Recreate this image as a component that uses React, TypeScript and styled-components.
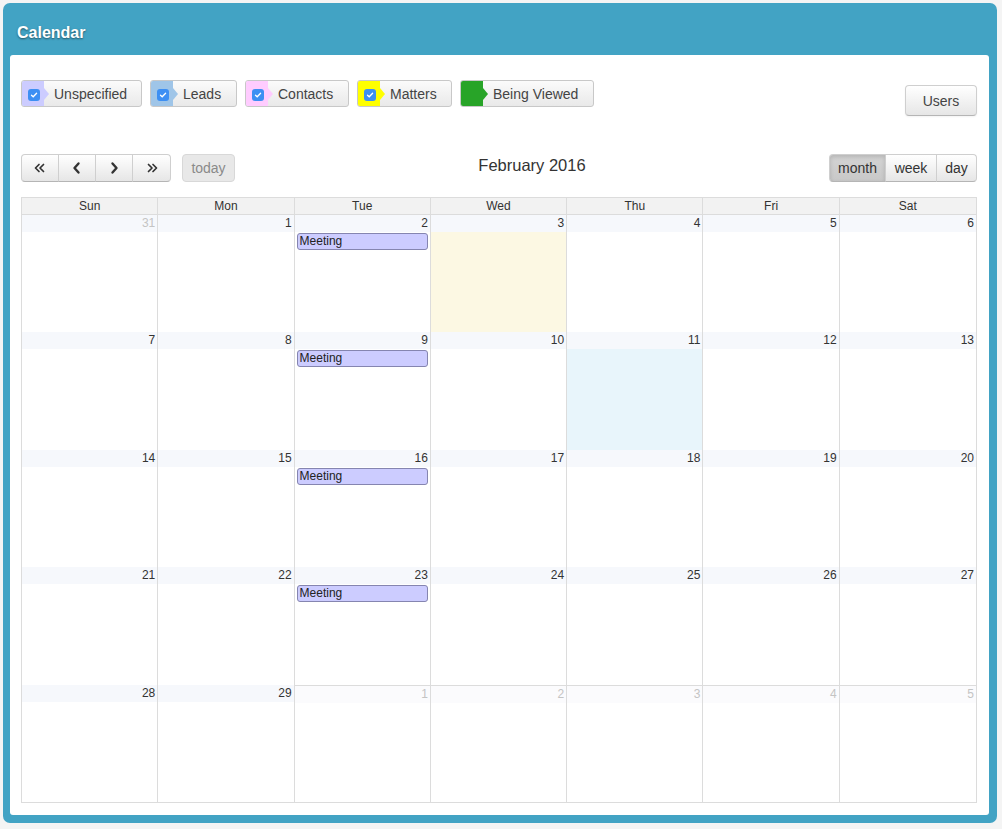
import React from "react"
import styled, {createGlobalStyle} from "styled-components"

const GlobalStyle = createGlobalStyle`
  body {
    margin: 0;
    background: #f4f4f4;
    font-family: "Liberation Sans", Arial, sans-serif;
    color: #333;
  }
`

type Filter = {
  label: string
  color: string
  checkbox: boolean
  width: number
}

const filters: Filter[] = [
  {label: "Unspecified", color: "#ccccff", checkbox: true, width: 121},
  {label: "Leads", color: "#9fc5e8", checkbox: true, width: 87},
  {label: "Contacts", color: "#ffccff", checkbox: true, width: 104},
  {label: "Matters", color: "#ffff00", checkbox: true, width: 95},
  {label: "Being Viewed", color: "#28a428", checkbox: false, width: 134},
]

type Day = {
  n: number
  other?: boolean
  today?: boolean
  selected?: boolean
  event?: string
  lastRow?: boolean
}

function buildDays(): Day[] {
  const days: Day[] = [{n: 31, other: true}]
  for (let d = 1; d <= 29; d++) {
    days.push({
      n: d,
      today: d === 3,
      selected: d === 11,
      event: d === 2 || d === 9 || d === 16 || d === 23 ? "Meeting" : undefined,
    })
  }
  for (let d = 1; d <= 5; d++) days.push({n: d, other: true, lastRow: true})
  return days
}

const weekdays = ["Sun", "Mon", "Tue", "Wed", "Thu", "Fri", "Sat"]

const Panel = styled.div`
  margin: 3px;
  width: 979px;
  background: #42a3c4;
  border-radius: 7px;
  padding: 0 8px 8px 7px;
`

const PanelHeader = styled.div`
  height: 52px;
  display: flex;
  align-items: center;
  padding-left: 7px;
  color: #fff;
  font-weight: bold;
  font-size: 16px;
  text-shadow: 0 1px 2px rgba(0, 0, 0, 0.5);
  padding-top: 7px;
  box-sizing: border-box;
`

const Body = styled.div`
  background: #fff;
  border-radius: 3px;
  padding: 25px 12px 12px 11px;
`

const FilterBar = styled.div`
  display: flex;
  align-items: flex-start;
  gap: 8px;
  height: 35px;
  margin-bottom: 39px;
`

const FilterButton = styled.div<{w: number}>`
  width: ${({w}) => w}px;
  height: 27px;
  box-sizing: border-box;
  display: flex;
  align-items: center;
  border: 1px solid #c8c8c8;
  border-radius: 3px;
  background: linear-gradient(#fbfbfb, #e9e9e9);
  font-size: 14px;
  color: #444;
  overflow: hidden;
`

const Swatch = styled.div<{color: string}>`
  position: relative;
  width: 22px;
  height: 100%;
  background: ${({color}) => color};
  display: flex;
  align-items: center;
  justify-content: center;
  margin-right: 10px;
  flex-shrink: 0;

  &::after {
    content: "";
    position: absolute;
    right: -5px;
    top: 50%;
    margin-top: -6px;
    border-style: solid;
    border-width: 6px 0 6px 5px;
    border-color: transparent transparent transparent ${({color}) => color};
  }
`

const Check = styled.div`
  width: 12px;
  height: 12px;
  border-radius: 3px;
  background: #3d8ff3;
  display: flex;
  align-items: center;
  justify-content: center;
  margin-top: 2px;
  margin-left: 2px;
`

const Spacer = styled.div`
  flex: 1;
`

const Button = styled.button`
  height: 28px;
  box-sizing: border-box;
  border: 1px solid #cfcfcf;
  border-bottom-color: #b5b5b5;
  background: linear-gradient(#ffffff, #e6e6e6);
  box-shadow: inset 0 1px 0 rgba(255, 255, 255, 0.2), 0 1px 2px rgba(0, 0, 0, 0.05);
  font-family: "Liberation Sans", Arial, sans-serif;
  font-size: 14px;
  color: #333;
  padding: 0;
  display: flex;
  align-items: center;
  justify-content: center;
`

const UsersButton = styled(Button)`
  width: 72px;
  height: 31px;
  margin-top: 5px;
  border-radius: 4px;
  font-size: 14px;
  color: #444;
`

const Toolbar = styled.div`
  display: flex;
  align-items: flex-start;
  margin-bottom: 15px;
`

const Group = styled.div`
  display: flex;
`

const GroupButton = styled(Button)<{w: number; active?: boolean}>`
  width: ${({w}) => w}px;
  border-radius: 0;
  margin-left: -1px;
  background: ${({active}) => (active ? "linear-gradient(#d4d4d4, #c8c8c8)" : "linear-gradient(#ffffff, #e6e6e6)")};
  box-shadow: ${({active}) => (active ? "inset 0 2px 4px rgba(0,0,0,0.15)" : "none")};

  &:first-child {
    margin-left: 0;
    border-radius: 4px 0 0 4px;
  }
  &:last-child {
    border-radius: 0 4px 4px 0;
  }
`

const TodayButton = styled(Button)`
  width: 53px;
  margin-left: 11px;
  border-radius: 4px;
  background: #e8e8e8;
  border-color: #d8d8d8;
  color: #8a8a8a;
  box-shadow: none;
`

const Title = styled.h2`
  flex: 1;
  margin: 0;
  text-align: center;
  font-size: 16.5px;
  font-weight: normal;
  line-height: 22px;
  color: #333;
`

const Grid = styled.div`
  border: 1px solid #dcdcdc;
  display: grid;
  grid-template-columns: repeat(7, 1fr);
  grid-template-rows: 17px repeat(5, 1fr);
  height: 604px;
`

const HeadCell = styled.div<{last?: boolean}>`
  background: #f2f2f2;
  border-bottom: 1px solid #dcdcdc;
  border-right: ${({last}) => (last ? "none" : "1px solid #dcdcdc")};
  font-size: 12px;
  line-height: 16px;
  text-align: center;
  color: #333;
`

const DayCell = styled.div<{last?: boolean; bg: string; top?: boolean}>`
  border-right: ${({last}) => (last ? "none" : "1px solid #dcdcdc")};
  border-top: ${({top}) => (top ? "1px solid #dcdcdc" : "none")};
  display: flex;
  flex-direction: column;
  background: ${({bg}) => bg};
  min-width: 0;
`

const DayNumber = styled.div<{other?: boolean; faint?: boolean}>`
  height: 17px;
  line-height: 17px;
  background: ${({faint}) => (faint ? "#fbfbfd" : "#f6f8fc")};
  text-align: right;
  padding-right: 2px;
  font-size: 12px;
  color: ${({other}) => (other ? "#c4c4c4" : "#333")};
`

const Event = styled.div`
  margin: 1px 2px 0 2px;
  height: 17px;
  box-sizing: border-box;
  border: 1px solid #8585b0;
  border-radius: 3px;
  background: #ccccff;
  font-size: 12px;
  line-height: 15px;
  padding-left: 2px;
  color: #222;
`

function Chevron({dir, double}: {dir: "left" | "right"; double?: boolean}) {
  const flip = dir === "right" ? "scale(-1,1) translate(-14,0)" : undefined
  return (
    <svg width="14" height="14" viewBox="0 0 14 14">
      <g transform={flip} fill="none" stroke="#333" strokeWidth={double ? 1.7 : 2.4} strokeLinecap="round" strokeLinejoin="round">
        {double ? (
          <>
            <path d="M6 3.5 L2.5 7 L6 10.5" />
            <path d="M10.5 3.5 L7 7 L10.5 10.5" />
          </>
        ) : (
          <path d="M8.5 2.5 L4.5 7 L8.5 11.5" />
        )}
      </g>
    </svg>
  )
}

export default function App() {
  const days = buildDays()

  return (
    <>
      <GlobalStyle />
      <Panel>
        <PanelHeader>Calendar</PanelHeader>
        <Body>
          <FilterBar>
            {filters.map((f) => (
              <FilterButton key={f.label} w={f.width}>
                <Swatch color={f.color}>
                  {f.checkbox && (
                    <Check>
                      <svg width="8" height="8" viewBox="0 0 8 8">
                        <path d="M1.5 4.2 L3.2 5.8 L6.6 2.2" fill="none" stroke="#fff" strokeWidth="1.3" strokeLinecap="round" />
                      </svg>
                    </Check>
                  )}
                </Swatch>
                {f.label}
              </FilterButton>
            ))}
            <Spacer />
            <UsersButton>Users</UsersButton>
          </FilterBar>

          <Toolbar>
            <Group>
              <GroupButton w={38}>
                <Chevron dir="left" double />
              </GroupButton>
              <GroupButton w={38}>
                <Chevron dir="left" />
              </GroupButton>
              <GroupButton w={38}>
                <Chevron dir="right" />
              </GroupButton>
              <GroupButton w={39}>
                <Chevron dir="right" double />
              </GroupButton>
            </Group>
            <TodayButton>today</TodayButton>
            <Title>February 2016</Title>
            <Group>
              <GroupButton w={57} active>
                month
              </GroupButton>
              <GroupButton w={52}>week</GroupButton>
              <GroupButton w={41}>day</GroupButton>
            </Group>
          </Toolbar>

          <Grid>
            {weekdays.map((w, i) => (
              <HeadCell key={w} last={i === 6}>
                {w}
              </HeadCell>
            ))}
            {days.map((d, i) => {
              const bg = d.today ? "#fcf8e3" : d.selected ? "#e8f5fb" : "#fff"
              return (
                <DayCell key={i} last={i % 7 === 6} bg={bg} top={d.lastRow}>
                  <DayNumber other={d.other} faint={d.lastRow}>
                    {d.n}
                  </DayNumber>
                  {d.event && <Event>{d.event}</Event>}
                </DayCell>
              )
            })}
          </Grid>
        </Body>
      </Panel>
    </>
  )
}
